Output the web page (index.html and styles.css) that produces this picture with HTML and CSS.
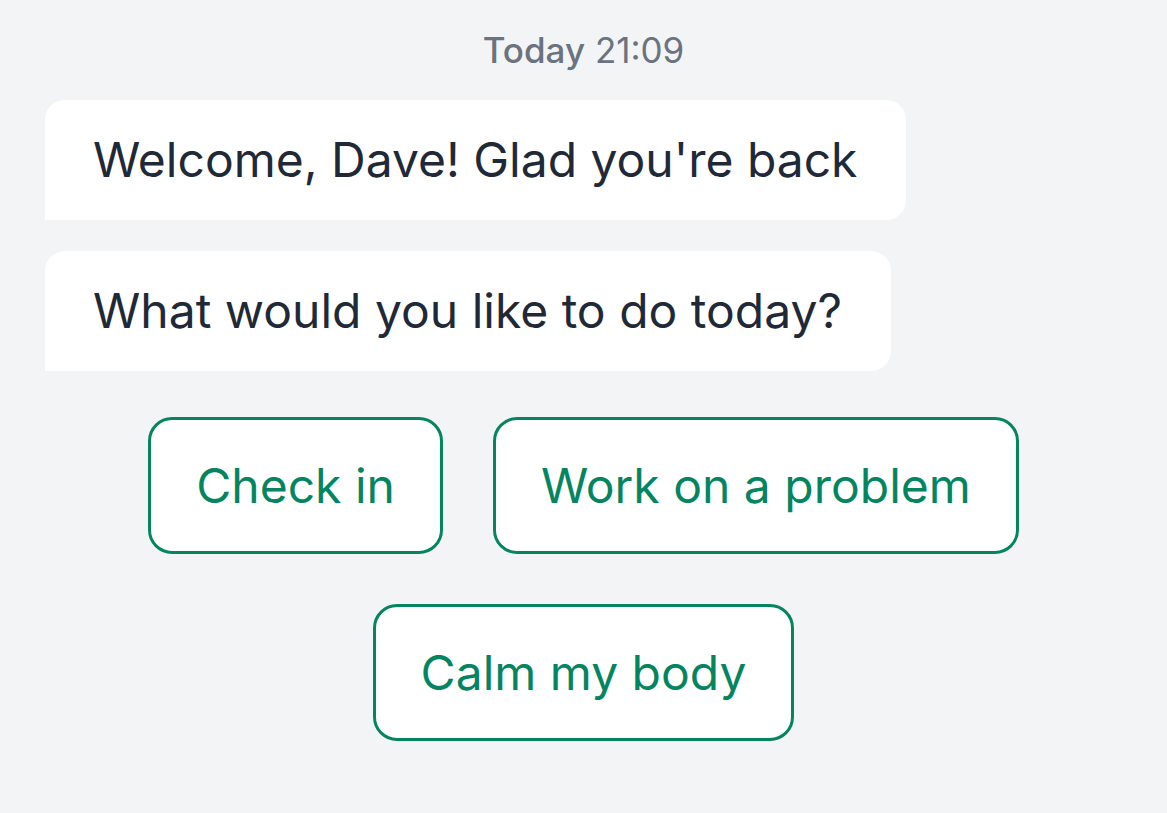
FILE: index.html
```html
<!DOCTYPE html>
<html lang="en">
<head>
<meta charset="utf-8">
<title>Chat</title>
<link rel="stylesheet" href="styles.css">
</head>
<body>
<main class="chat">
  <div class="stamp"><span class="stamp-day">Today</span> 21:09</div>
  <div class="bubble">Welcome, Dave! Glad you're back</div>
  <div class="bubble">What would you like to do today?</div>
  <div class="choices">
    <button class="choice">Check in</button>
    <button class="choice">Work on a problem</button>
    <button class="choice">Calm my body</button>
  </div>
</main>
</body>
</html>
```
FILE: styles.css
```css
html, body {
  margin: 0;
  padding: 0;
  background: #f3f4f6;
}
body {
  font-family: Inter, "Noto Sans", "Liberation Sans", sans-serif;
  width: 1167px;
  height: 813px;
  overflow: hidden;
}
.chat {
  display: flex;
  flex-direction: column;
  align-items: flex-start;
  padding: 25px 0 0 45px;
}
.stamp {
  align-self: stretch;
  margin-left: -45px;
  text-align: center;
  font-size: 35px;
  line-height: 50px;
  color: #6b7280;
  margin-bottom: 25px;
}
.stamp-day {
  font-weight: 500;
}
.bubble {
  background: #ffffff;
  color: #1f2937;
  font-size: 48px;
  line-height: 72px;
  padding: 24px 49px 24px 48px;
  border-radius: 20px 20px 20px 0;
  margin-bottom: 31px;
}
.choices {
  align-self: stretch;
  margin-left: -45px;
  margin-top: 15px;
  display: flex;
  flex-wrap: wrap;
  justify-content: center;
  gap: 50px;
  padding: 0 60px;
}
.choice {
  font-family: inherit;
  font-size: 48px;
  line-height: 72px;
  color: #04855f;
  background: #ffffff;
  border: 3px solid #04855f;
  border-radius: 24px;
  padding: 30px 45px 29px;
  margin: 0;
}
```
